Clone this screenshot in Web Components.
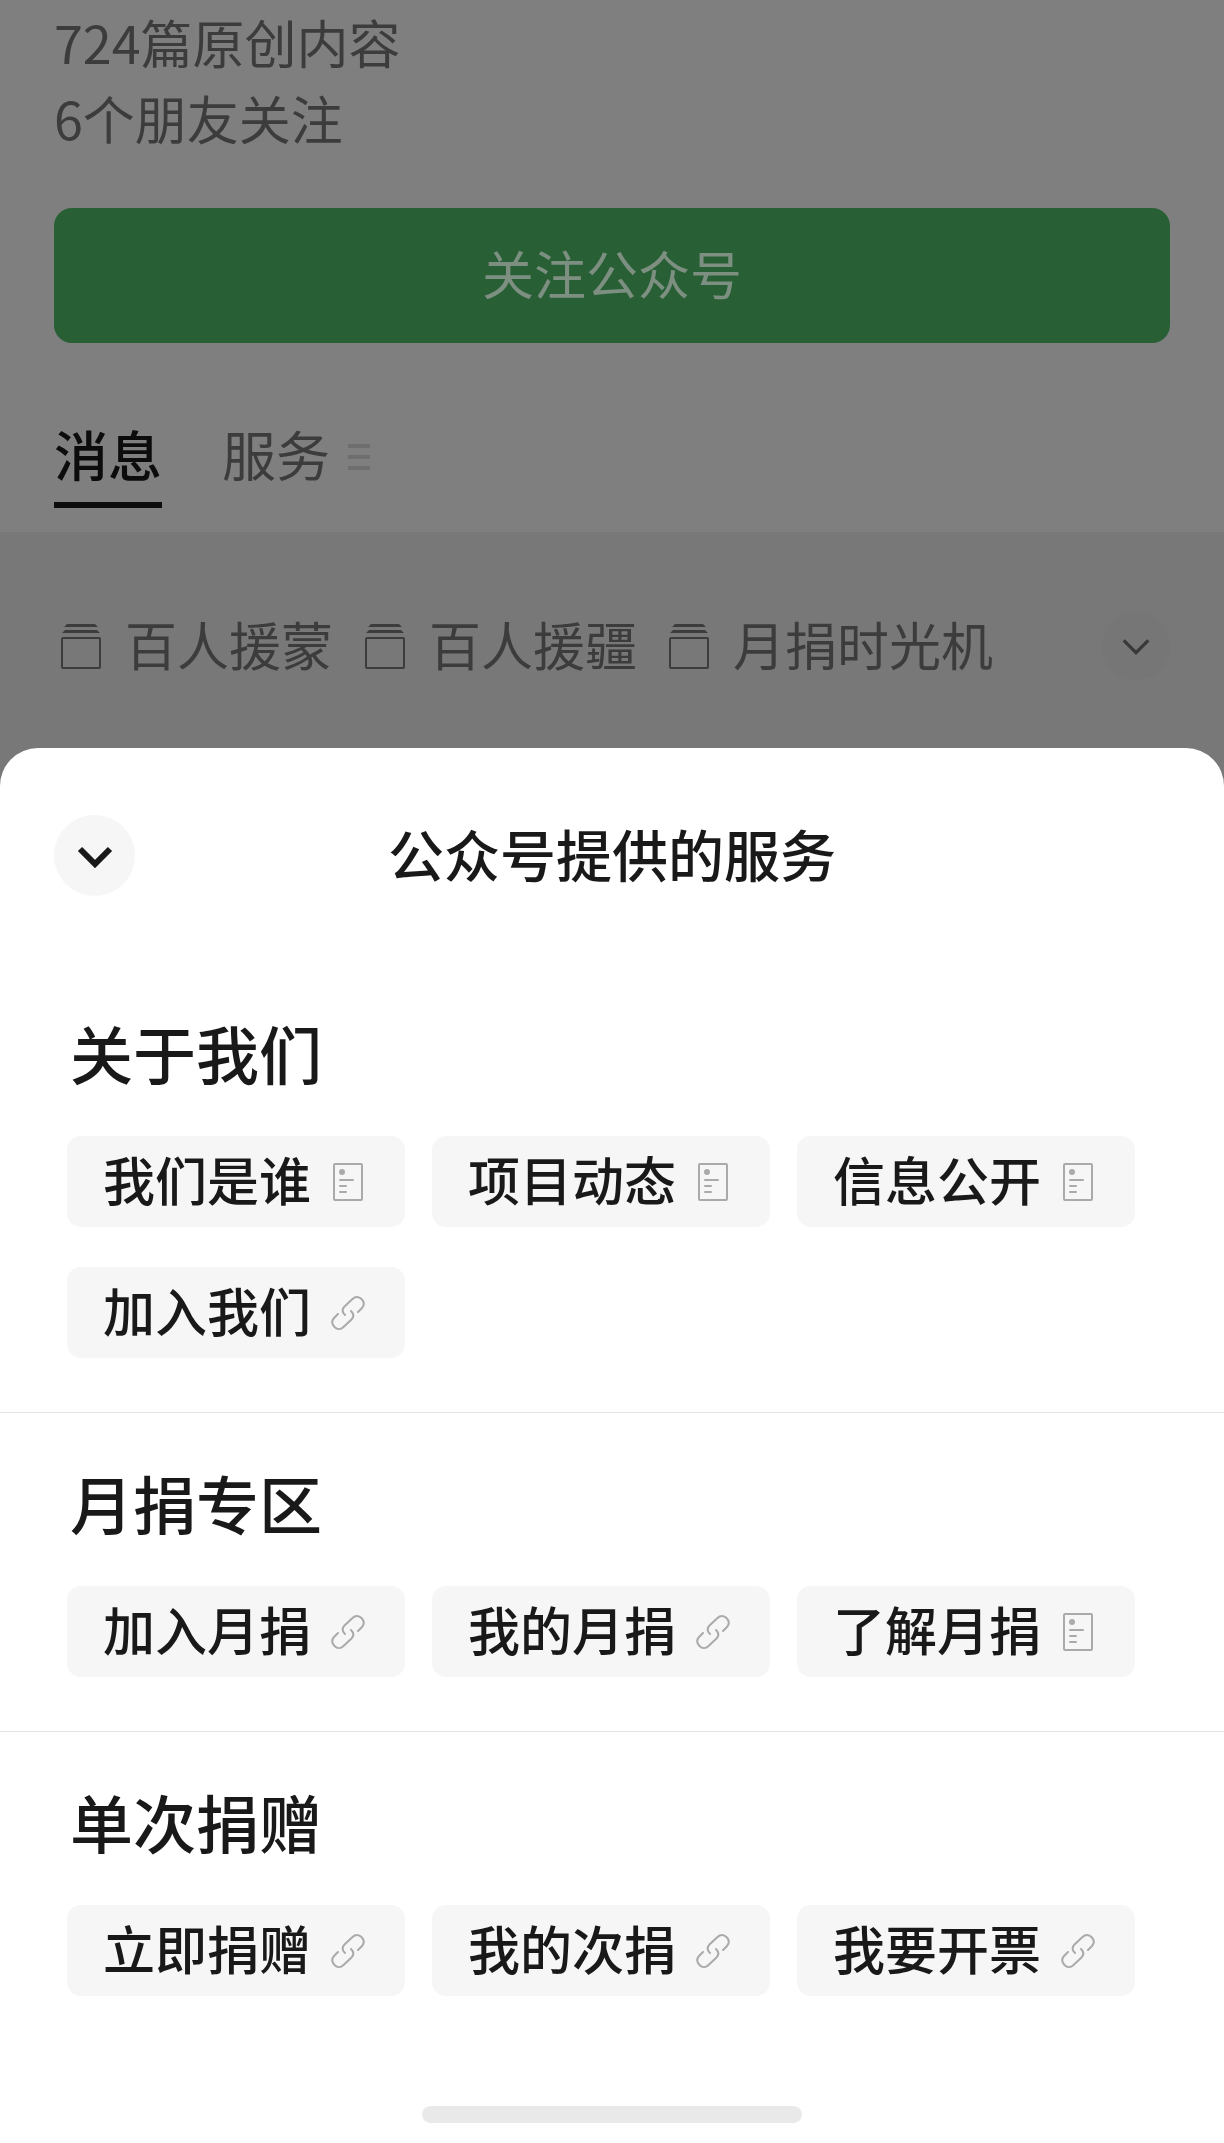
<!DOCTYPE html>
<html lang="zh-CN">
<head>
    <meta charset="UTF-8">
    <meta name="viewport" content="width=device-width, initial-scale=1.0">
    <title>公众号提供的服务</title>
    <style>
        body {
            margin: 0;
            min-height: 100vh;
            display: flex;
            flex-direction: column;
            background: #7f7f7f;
            font-family: "Noto Sans CJK SC", sans-serif;
            font-size: 52px;
        }
    </style>
</head>
<body>
    <account-page>
        <span slot="stats">724篇原创内容</span>
        <span slot="stats">6个朋友关注</span>
        <follow-button slot="follow">关注公众号</follow-button>
        <tab-item slot="tabs" active>消息</tab-item>
        <tab-item slot="tabs" menu>服务</tab-item>
        <album-link slot="albums">百人援蒙</album-link>
        <album-link slot="albums">百人援疆</album-link>
        <album-link slot="albums">月捐时光机</album-link>
        <round-button slot="more" small label="展开"></round-button>
    </account-page>

    <service-sheet>
        <round-button slot="close" label="收起"></round-button>
        <span slot="title">公众号提供的服务</span>
        <service-group>
            <span slot="heading">关于我们</span>
            <service-chip icon="doc">我们是谁</service-chip>
            <service-chip icon="doc">项目动态</service-chip>
            <service-chip icon="doc">信息公开</service-chip>
            <service-chip icon="link">加入我们</service-chip>
        </service-group>
        <service-group>
            <span slot="heading">月捐专区</span>
            <service-chip icon="link">加入月捐</service-chip>
            <service-chip icon="link">我的月捐</service-chip>
            <service-chip icon="doc">了解月捐</service-chip>
        </service-group>
        <service-group>
            <span slot="heading">单次捐赠</span>
            <service-chip icon="link">立即捐赠</service-chip>
            <service-chip icon="link">我的次捐</service-chip>
            <service-chip icon="link">我要开票</service-chip>
        </service-group>
    </service-sheet>

    <script>
        // clones the class's template into an open shadow root
        class BaseElement extends HTMLElement {
            constructor() {
                super()
                const template = document.createElement('template')
                template.innerHTML = this.constructor.markup
                this.attachShadow({ mode: 'open' })
                this.shadowRoot.append(template.content.cloneNode(true))
            }
        }

        class AccountPage extends BaseElement {
            static markup = `
<style>
:host { display: block; color: #3c3c3c; }
.profile { padding: 4px 54px 0; }
.stats { display: flex; flex-direction: column; line-height: 76px; margin-bottom: 52px; }
nav { display: flex; gap: 60px; padding: 75px 54px 24px; }
.albums {
    display: flex;
    align-items: center;
    justify-content: space-between;
    padding: 80px 54px 108px 61px;
    background: #787878;
}
.list { display: flex; gap: 32px; }
</style>
<div class="profile">
    <div class="stats"><slot name="stats"></slot></div>
    <slot name="follow"></slot>
</div>
<nav><slot name="tabs"></slot></nav>
<div class="albums">
    <div class="list"><slot name="albums"></slot></div>
    <slot name="more"></slot>
</div>`
        }

        class FollowButton extends BaseElement {
            static markup = `
<style>
:host { display: block; }
button {
    display: block;
    width: 100%;
    height: 135px;
    padding: 0 0 6px;
    border: 0;
    border-radius: 18px;
    background: #285f35;
    color: #7c8f80;
    font: inherit;
}
</style>
<button type="button"><slot></slot></button>`
        }

        class TabItem extends BaseElement {
            static markup = `
<style>
:host { display: block; }
button {
    display: flex;
    align-items: center;
    gap: 18px;
    padding: 0 0 6px;
    border: 0;
    border-bottom: 6px solid transparent;
    background: none;
    color: inherit;
    font: inherit;
    font-size: 54px;
    line-height: 72px;
}
.text { padding-bottom: 6px; }
svg { display: none; width: 22px; height: 28px; }
:host([active]) button { border-color: #0c0c0c; color: #0c0c0c; font-weight: 500; }
:host([menu]) svg { display: block; }
</style>
<button type="button">
    <span class="text"><slot></slot></span>
    <svg viewBox="0 0 22 28" stroke="#6e6e6e" stroke-width="4"><path d="M0 3h22M0 14h22M0 25h22"/></svg>
</button>`
        }

        class AlbumLink extends BaseElement {
            static markup = `
<style>
:host { display: block; }
a {
    display: flex;
    align-items: center;
    gap: 24px;
    color: inherit;
    line-height: 64px;
    text-decoration: none;
    white-space: nowrap;
}
.text { padding-bottom: 4px; }
svg { width: 40px; height: 45px; }
</style>
<a href="#">
    <svg viewBox="0 0 40 45">
        <path d="M6 0h28l3 3H3zM4 6h32l3 3H1z" fill="#3c3c3c"/>
        <rect x="1" y="14" width="38" height="30" rx="1" fill="none" stroke="#3c3c3c" stroke-width="2"/>
    </svg>
    <span class="text"><slot></slot></span>
</a>`
        }

        class RoundButton extends BaseElement {
            static markup = `
<style>
:host { display: block; }
button {
    display: grid;
    place-items: center;
    width: 81px;
    height: 81px;
    padding: 2px 0 0;
    border: 0;
    border-radius: 50%;
    background: #f6f6f6;
    color: #191919;
}
svg { width: 36px; height: 22px; stroke-width: 6; }
:host([small]) button { width: 68px; height: 68px; background: #767676; color: #393939; }
:host([small]) svg { width: 30px; height: 18px; stroke-width: 4; }
</style>
<button type="button">
    <svg viewBox="0 0 36 22" fill="none" stroke="currentColor"><path d="M3 3l15 15L33 3"/></svg>
</button>`
            connectedCallback() {
                this.shadowRoot.querySelector('button').setAttribute('aria-label', this.getAttribute('label'))
            }
        }

        class ServiceSheet extends BaseElement {
            static markup = `
<style>
:host {
    flex: 1;
    display: flex;
    flex-direction: column;
    margin-top: -40px;
    border-radius: 38px 38px 0 0;
    background: #fff;
    color: #191919;
}
header {
    display: grid;
    grid-template-columns: 81px 1fr 81px;
    align-items: center;
    padding: 67px 54px;
}
h1 {
    margin: 0;
    padding-bottom: 6px;
    font-size: 56px;
    font-weight: 500;
    line-height: 75px;
    text-align: center;
}
.bar {
    width: 31%;
    height: 17px;
    margin: auto auto 20px;
    border-radius: 9px;
    background: #e9e9e9;
}
</style>
<header>
    <slot name="close"></slot>
    <h1><slot name="title"></slot></h1>
</header>
<main><slot></slot></main>
<div class="bar"></div>`
        }

        class ServiceGroup extends BaseElement {
            static markup = `
<style>
:host { display: block; padding: 44px 67px 54px; border-bottom: 1px solid #e5e5e5; }
:host(:last-of-type) { border-bottom: 0; }
h2 {
    margin: 0 3px 39px;
    font-size: 63px;
    font-weight: 500;
    line-height: 90px;
}
.chips { display: flex; flex-wrap: wrap; gap: 40px 27px; }
</style>
<h2><slot name="heading"></slot></h2>
<div class="chips"><slot></slot></div>`
        }

        class ServiceChip extends BaseElement {
            static icons = {
                doc: `<rect x="5" y="1" width="28" height="36" rx="1" stroke-width="2"/>
                    <circle cx="13" cy="9" r="3" fill="#aaa" stroke="none"/>
                    <path d="M11 17h13M11 23h6M11 29h6" stroke-width="2"/>`,
                link: `<path d="M16 21C13 18 13 15 15.500 12.500L23.500 5C26.500 2 30 2.500 32.500 5C35 7.500 35.500 11 33 14L29 18" stroke-width="2"/>
                    <path d="M22 17C25 20 25 23 22.500 25.500L14.500 33C11.500 36 8 35.500 5.500 33C3 30.500 2.500 27 5 24L9 20" stroke-width="2"/>`
            }
            static markup = `
<style>
:host { display: block; font-weight: 500; }
a {
    display: flex;
    align-items: center;
    gap: 18px;
    padding: 0 38px 0 36px;
    border-radius: 14px;
    background: #f6f6f6;
    color: inherit;
    line-height: 85px;
    text-decoration: none;
    white-space: nowrap;
}
.text { padding-bottom: 6px; }
svg { width: 38px; height: 38px; }
</style>
<a href="#">
    <span class="text"><slot></slot></span>
    <svg viewBox="0 0 38 38" fill="none" stroke="#aaa" stroke-linecap="round"></svg>
</a>`
            connectedCallback() {
                this.shadowRoot.querySelector('svg').innerHTML = ServiceChip.icons[this.getAttribute('icon')]
            }
        }

        customElements.define('account-page', AccountPage)
        customElements.define('follow-button', FollowButton)
        customElements.define('tab-item', TabItem)
        customElements.define('album-link', AlbumLink)
        customElements.define('round-button', RoundButton)
        customElements.define('service-sheet', ServiceSheet)
        customElements.define('service-group', ServiceGroup)
        customElements.define('service-chip', ServiceChip)
    </script>
</body>
</html>
